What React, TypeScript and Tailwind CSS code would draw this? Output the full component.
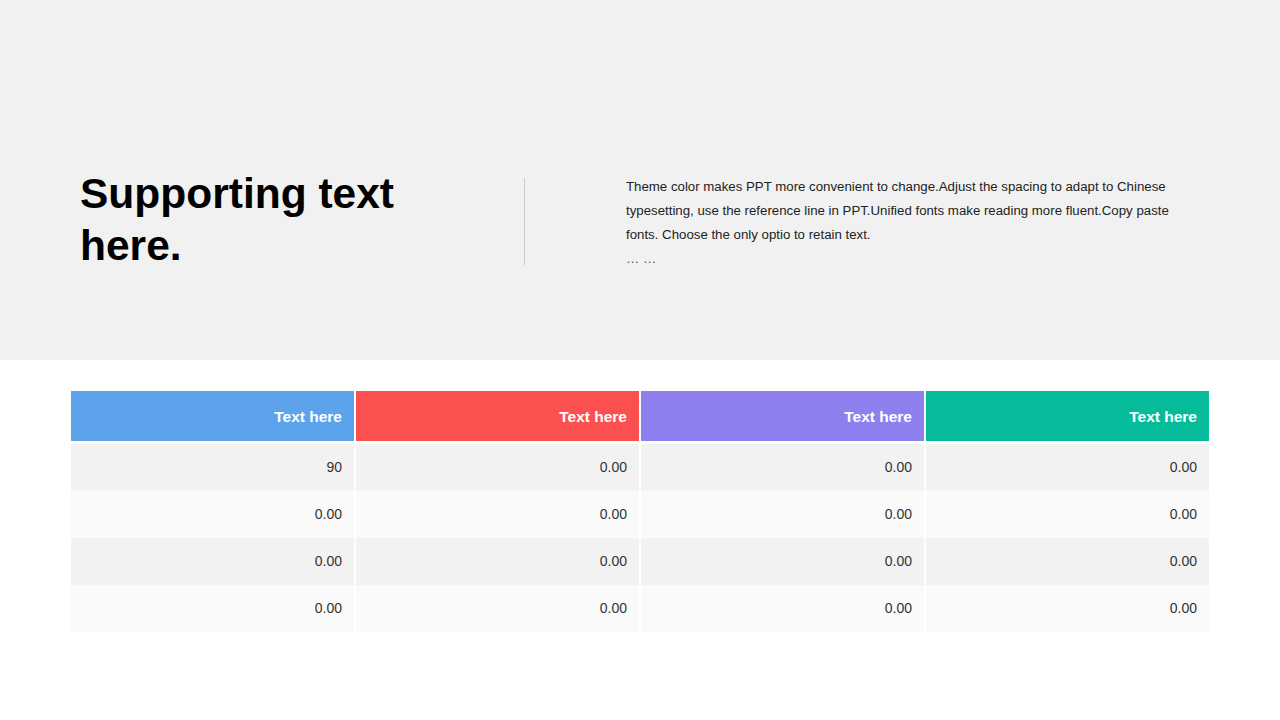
const headers = [
  { label: "Text here", color: "bg-[#5ca3ec]" },
  { label: "Text here", color: "bg-[#fb4f50]" },
  { label: "Text here", color: "bg-[#8e7fee]" },
  { label: "Text here", color: "bg-[#05bb9a]" },
];

const rows = [
  ["90", "0.00", "0.00", "0.00"],
  ["0.00", "0.00", "0.00", "0.00"],
  ["0.00", "0.00", "0.00", "0.00"],
  ["0.00", "0.00", "0.00", "0.00"],
];

export default function App() {
  return (
    <div className="w-[1280px] h-[720px] bg-white font-['Liberation_Sans',Arial,sans-serif] overflow-hidden">
      {/* top band */}
      <div className="h-[360px] bg-[#f1f1f1] flex items-start pl-[80px] pt-[168px]">
        <h1 className="w-[444px] text-[42.5px] leading-[52px] font-bold text-black">
          Supporting text
          <br />
          here.
        </h1>
        <div className="w-px h-[87px] mt-[10px] bg-[#c9c9c9]" />
        <div className="ml-[101px] mt-[7px] text-[13.25px] leading-[24px] text-[#222] whitespace-nowrap">
          <p>Theme color makes PPT more convenient to change.Adjust the spacing to adapt to Chinese</p>
          <p>typesetting, use the reference line in PPT.Unified fonts make reading more fluent.Copy paste</p>
          <p>fonts. Choose the only optio to retain text.</p>
          <p className="text-[#555]">… …</p>
        </div>
      </div>

      {/* table */}
      <div className="px-[71px] pt-[31px]">
        <div className="grid grid-cols-4 gap-[2px]">
          {headers.map((h, i) => (
            <div
              key={i}
              className={`${h.color} h-[50px] flex items-center justify-end pr-[12px] pt-[2px] text-white text-[15.5px] font-bold`}
            >
              {h.label}
            </div>
          ))}
        </div>
        <div className="mt-[3px]">
          {rows.map((r, ri) => (
            <div key={ri} className="grid grid-cols-4 gap-[2px]">
              {r.map((v, ci) => (
                <div
                  key={ci}
                  className={`${ri % 2 === 0 ? "bg-[#f2f2f2]" : "bg-[#fafafa]"} h-[47px] flex items-center justify-end pr-[12px] text-[14px] text-[#333]`}
                >
                  {v}
                </div>
              ))}
            </div>
          ))}
        </div>
      </div>
    </div>
  );
}
